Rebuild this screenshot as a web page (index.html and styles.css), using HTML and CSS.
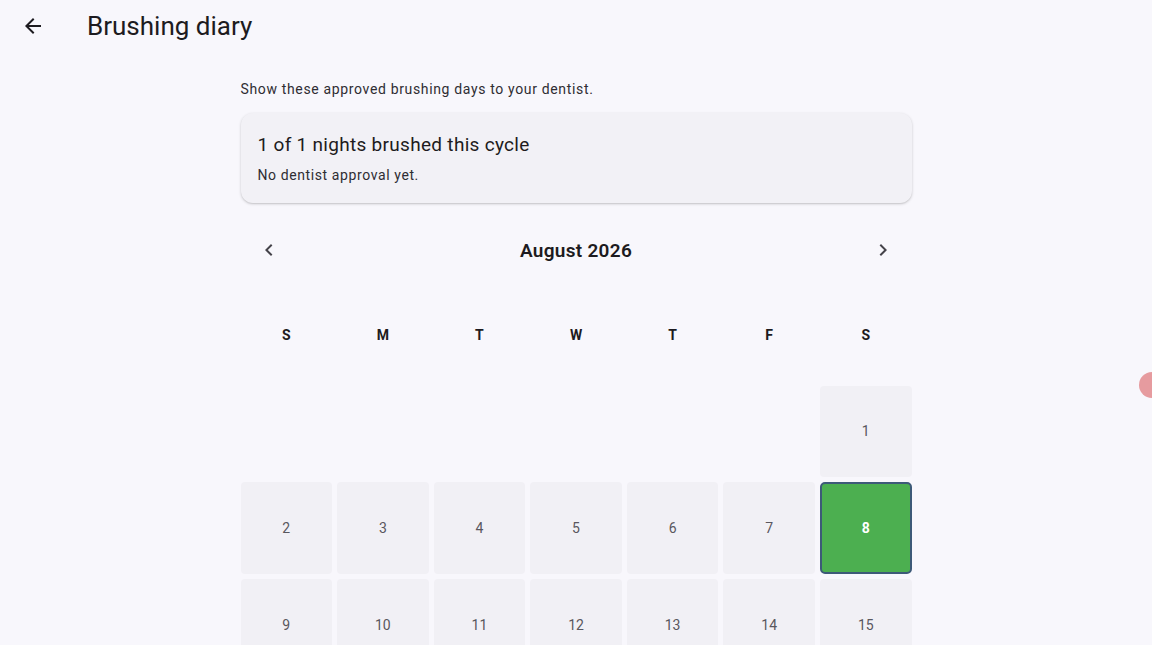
FILE: index.html
```html
<!DOCTYPE html>
<html>
<head>
    <meta charset="UTF-8">
    <link rel="stylesheet" href="styles.css">
</head>
<body>
    <div class="app-bar">
        <button class="back-btn" title="Back">
            <svg viewBox="0 0 24 24">
                <path d="M20 11H7.83l5.59-5.59L12 4l-8 8 8 8 1.41-1.41L7.83 13H20v-2z"/>
            </svg>
        </button>
        <h1 class="app-title">Brushing diary</h1>
    </div>

    <div class="content">
        <p class="intro">Show these approved brushing days to your dentist.</p>

        <div class="summary-card">
            <div class="summary-title">1 of 1 nights brushed this cycle</div>
            <div class="summary-sub">No dentist approval yet.</div>
        </div>

        <div class="month-nav">
            <button class="nav-btn" title="Previous month">
                <svg viewBox="0 0 24 24"><path d="M15.41 7.41 14 6l-6 6 6 6 1.41-1.41L10.83 12z"/></svg>
            </button>
            <div class="month-label">August 2026</div>
            <button class="nav-btn" title="Next month">
                <svg viewBox="0 0 24 24"><path d="M10 6 8.59 7.41 13.17 12l-4.58 4.59L10 18l6-6z"/></svg>
            </button>
        </div>

        <div class="calendar">
            <div class="weekday">S</div>
            <div class="weekday">M</div>
            <div class="weekday">T</div>
            <div class="weekday">W</div>
            <div class="weekday">T</div>
            <div class="weekday">F</div>
            <div class="weekday">S</div>

            <div class="day empty"></div>
            <div class="day empty"></div>
            <div class="day empty"></div>
            <div class="day empty"></div>
            <div class="day empty"></div>
            <div class="day empty"></div>
            <div class="day">1</div>

            <div class="day">2</div>
            <div class="day">3</div>
            <div class="day">4</div>
            <div class="day">5</div>
            <div class="day">6</div>
            <div class="day">7</div>
            <div class="day brushed">8</div>

            <div class="day">9</div>
            <div class="day">10</div>
            <div class="day">11</div>
            <div class="day">12</div>
            <div class="day">13</div>
            <div class="day">14</div>
            <div class="day">15</div>

            <div class="day">16</div>
            <div class="day">17</div>
            <div class="day">18</div>
            <div class="day">19</div>
            <div class="day">20</div>
            <div class="day">21</div>
            <div class="day">22</div>

            <div class="day">23</div>
            <div class="day">24</div>
            <div class="day">25</div>
            <div class="day">26</div>
            <div class="day">27</div>
            <div class="day">28</div>
            <div class="day">29</div>

            <div class="day">30</div>
            <div class="day">31</div>
        </div>
    </div>

    <div class="edge-dot"></div>
</body>
</html>
```

FILE: styles.css
```css
html, body {
    margin: 0;
    padding: 0;
    background-color: #f8f7fc;
    font-family: Roboto, "Noto Sans", sans-serif;
    color: #1d1b20;
}
button {
    background: transparent;
    border: none;
    padding: 0;
    cursor: pointer;
}
.app-bar {
    display: flex;
    align-items: center;
    height: 52px;
    padding-left: 21px;
}
.back-btn {
    width: 24px;
    height: 24px;
    display: flex;
}
.back-btn svg {
    width: 24px;
    height: 24px;
    fill: #1d1b20;
}
.app-title {
    margin: 0 0 0 42px;
    font-size: 26px;
    font-weight: 400;
    color: #1d1b20;
}
.content {
    width: 671px;
    margin: 0 auto;
    padding-top: 29px;
}
.intro {
    margin: 0 0 16px 0;
    font-size: 14px;
    letter-spacing: 0.65px;
    color: #2f2d33;
}
.summary-card {
    background-color: #f2f1f6;
    border-radius: 12px;
    box-shadow: 0 1px 3px rgba(0, 0, 0, 0.18), 0 1px 1px rgba(0, 0, 0, 0.06);
    padding: 20px 17px 20px;
}
.summary-title {
    font-size: 19px;
    font-weight: 400;
    letter-spacing: 0.3px;
    color: #1d1b20;
}
.summary-sub {
    margin-top: 11px;
    font-size: 14px;
    letter-spacing: 0.6px;
    color: #2f2d33;
}
.month-nav {
    display: flex;
    align-items: center;
    justify-content: space-between;
    height: 48px;
    margin-top: 23px;
    padding: 0 16px;
}
.nav-btn {
    width: 24px;
    height: 24px;
    display: flex;
}
.nav-btn svg {
    width: 24px;
    height: 24px;
    fill: #45434a;
}
.month-label {
    font-size: 19px;
    font-weight: 600;
    letter-spacing: 0.3px;
    color: #1d1b20;
}
.calendar {
    display: grid;
    grid-template-columns: repeat(7, 1fr);
    gap: 5px;
    margin-top: 15px;
}
.weekday {
    aspect-ratio: 1;
    display: flex;
    align-items: center;
    justify-content: center;
    font-size: 14px;
    font-weight: 700;
    color: #1d1b20;
}
.day {
    aspect-ratio: 1;
    display: flex;
    align-items: center;
    justify-content: center;
    background-color: #f1f0f5;
    border-radius: 4px;
    font-size: 14px;
    color: #59575e;
    box-sizing: border-box;
}
.day.empty {
    background-color: transparent;
}
.day.brushed {
    background-color: #4caf50;
    border: 2px solid #3d5a78;
    border-radius: 5px;
    color: #ffffff;
    font-weight: 700;
}
.edge-dot {
    position: fixed;
    left: 1139px;
    top: 372px;
    width: 26px;
    height: 26px;
    border-radius: 50%;
    background-color: #e69b9f;
}
```
